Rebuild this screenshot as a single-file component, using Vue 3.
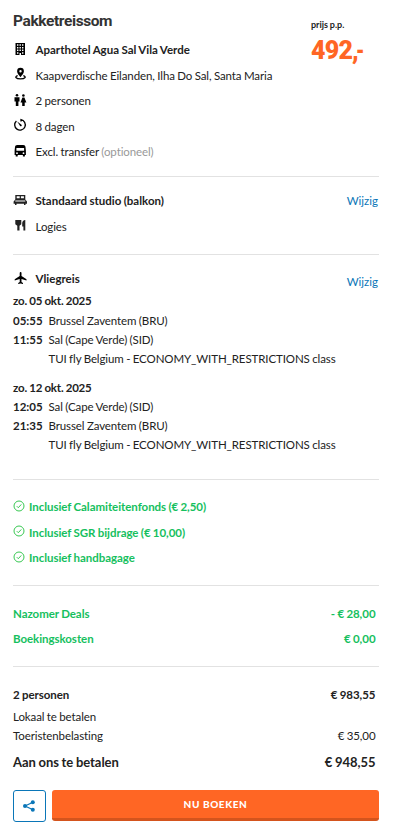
<script setup>
const flights = [
  { date: 'zo. 05 okt. 2025', dep: '05:55', from: 'Brussel Zaventem (BRU)', arr: '11:55', to: 'Sal (Cape Verde) (SID)' },
  { date: 'zo. 12 okt. 2025', dep: '12:05', from: 'Sal (Cape Verde) (SID)', arr: '21:35', to: 'Brussel Zaventem (BRU)' },
]
const included = ['Inclusief Calamiteitenfonds (€ 2,50)', 'Inclusief SGR bijdrage (€ 10,00)', 'Inclusief handbagage']
</script>

<template>
  <main class="summary">
    <section class="trip">
      <div class="trip-info">
        <h1>Pakketreissom</h1>
        <div class="row">
          <svg class="icon up" viewBox="0 0 14 14"><path fill-rule="evenodd" d="M2.5 1h9.500v12H8V11H6.500V13H2.500ZM4 2.200v1.500h1.400V2.200Zm2.500 0v1.500h1.400V2.200Zm2.500 0v1.500h1.400V2.200ZM4 4.900v1.500h1.400V4.900Zm2.500 0v1.500h1.400V4.900Zm2.500 0v1.500h1.400V4.900ZM4 7.600v1.500h1.400V7.600Zm2.500 0v1.500h1.400V7.600Zm2.500 0v1.500h1.400V7.600ZM4 10.300v1.500h1.400V10.300Zm5 0v1.500h1.400V10.300Z" /></svg>
          <b>Aparthotel Agua Sal Vila Verde</b>
        </div>
        <div class="row">
          <svg class="icon up" viewBox="0 0 14 14"><path fill-rule="evenodd" d="M7.500 .8a3.400 3.400 0 0 1 3.400 3.400C10.900 6.600 7.500 10 7.500 10S4.100 6.600 4.100 4.200A3.400 3.400 0 0 1 7.500 .8Zm0 2.200a1.200 1.200 0 1 0 0 2.400a1.200 1.200 0 0 0 0-2.400Z" /><path d="M4.700 8.700C1.400 9.700 2.600 11.900 7.500 11.900s6.100-2.200 2.800-3.200" fill="none" stroke="#000" stroke-width="1.400" /></svg>
          <span>Kaapverdische Eilanden, Ilha Do Sal, Santa Maria</span>
        </div>
        <div class="row">
          <svg class="icon up" viewBox="0 0 14 14"><circle cx="4" cy="2.200" r="1.300" /><path d="M1.500 4.200h5v4.300H5.400V13H2.800V8.500H1.500ZM9.400 4.600h2l2 4.900h-1.700V13H9.200V9.500H7.500Z" /><circle cx="10.400" cy="2.500" r="1.300" /></svg>
          <span>2 personen</span>
        </div>
        <div class="row">
          <svg class="icon up" viewBox="0 0 14 14"><path d="M8 3.500V1.600a5.300 5.300 0 1 1-4.600 1.300" fill="none" stroke="#000" stroke-width="1.300" /><path d="M4.200 3.500l4.300 3.300c.8.900-.5 2.100-1.400 1.300Z" /></svg>
          <span>8 dagen</span>
        </div>
        <div class="row">
          <svg class="icon up" viewBox="0 0 14 14"><path fill-rule="evenodd" d="M4.300 1h5.900c1.500 0 2.100.7 2.300 2l.4 3.800v4.100h-1V12.500H9.900v-1.600H4.700V12.500H2.700v-1.600H1.600V6.800L2 3C2.200 1.700 2.800 1 4.300 1ZM3.400 3.900v2.900h7.700V3.900ZM4 8.300a.9.900 0 1 0 0 1.800a.9.900 0 0 0 0-1.800Zm6.500 0a.9.900 0 1 0 0 1.800a.9.900 0 0 0 0-1.800Z" /></svg>
          <span>Excl. transfer <span class="muted">(optioneel)</span></span>
        </div>
      </div>
      <div class="price">
        <small>prijs p.p.</small>
        <strong>492<span class="comma">,</span><span class="dash">-</span></strong>
      </div>
    </section>

    <section class="room">
      <div>
        <div class="row">
          <svg class="icon dark up" viewBox="0 0 14 14"><path fill-rule="evenodd" d="M2.300 2h10v4.500l1.700 2V10.700h-1.500v1.300H11V10.700H3.500v1.300H2V10.700H.6V8.500l1.700-2ZM3.700 3.300v2h3v-2Zm4.200 0v2h3v-2ZM2.300 7.500v.9h10v-.9Z" /></svg>
          <b>Standaard studio (balkon)</b>
        </div>
        <div class="row">
          <svg class="icon dark up" viewBox="0 0 14 14"><path d="M2.300 2h6v4.300L6.500 7.800v4.700H4.300V7.800L2.300 6.300ZM12.300 2v10.500h-1.900V8.500H9.200V5.200c0-1.800 1.200-3.200 3.100-3.200Z" /></svg>
          <span>Logies</span>
        </div>
      </div>
      <a class="change">Wijzig</a>
    </section>

    <section class="travel">
      <div class="travel-head">
        <div class="row">
          <svg class="icon up" viewBox="0 0 14 14"><path d="M6.700 5V1.900C6.700 .6 8.500 .6 8.500 1.900V5l5 3.300v1.200L8.500 8v3l1.500 1.100v.9L7.600 12.400l-2.400.6v-.9L6.700 11V8L1.700 9.500V8.300Z" /></svg>
          <b>Vliegreis</b>
        </div>
        <a class="change">Wijzig</a>
      </div>
      <div v-for="f in flights" :key="f.date" class="flight">
        <b class="date">{{ f.date }}</b>
        <b>{{ f.dep }}</b><span>{{ f.from }}</span>
        <b>{{ f.arr }}</b><span>{{ f.to }}</span>
        <span class="carrier">TUI fly Belgium - ECONOMY_WITH_RESTRICTIONS class</span>
      </div>
    </section>

    <section class="included">
      <div v-for="item in included" :key="item" class="inc">
        <svg viewBox="0 0 12 12"><circle cx="6" cy="6" r="5" /><path d="M3.800 6.200l1.500 1.500l3-3.300" /></svg>
        <b>{{ item }}</b>
      </div>
    </section>

    <section class="deals">
      <div class="line"><b>Nazomer Deals</b><b>- € 28,00</b></div>
      <div class="line"><b>Boekingskosten</b><b>€ 0,00</b></div>
    </section>

    <section class="totals">
      <div class="line persons"><b>2 personen</b><b>€ 983,55</b></div>
      <div class="line"><span>Lokaal te betalen</span></div>
      <div class="line"><span>Toeristenbelasting</span><span>€ 35,00</span></div>
      <div class="line grand"><b>Aan ons te betalen</b><b>€ 948,55</b></div>
    </section>

    <div class="actions">
      <button class="share" aria-label="Delen">
        <svg viewBox="0 0 12 12"><path d="M10 2.200L2 6l8 3.800" /><circle cx="2" cy="6" r="2" /><circle cx="9.800" cy="2.200" r="2" /><circle cx="9.800" cy="9.800" r="2" /></svg>
      </button>
      <button class="book">NU BOEKEN</button>
    </div>
  </main>
</template>

<style>
body { background: #fff; }
</style>

<style scoped>
.summary {
  box-sizing: border-box;
  width: 407px;
  height: 835px;
  padding: 0 28px 0 13px;
  overflow: hidden;
  font: 11.5px/19px Lato, sans-serif;
  font-variant-ligatures: none;
  letter-spacing: -.1px;
  word-spacing: -.4px;
  color: #222;
  white-space: nowrap;
}
b { letter-spacing: -.05px; }
section { box-sizing: border-box; border-bottom: 1px solid #e2e2e2; }
h1 {
  margin: 0 0 6px;
  font: 700 15.5px/20px Roboto, sans-serif;
  letter-spacing: -.4px;
  color: #333;
}
.trip { display: flex; height: 177px; padding-top: 11px; }
.trip-info { width: 297px; }
.row { display: flex; align-items: center; height: 25.500px; gap: 8.500px; }
.row b { letter-spacing: 0; }
.icon { width: 14px; height: 14px; flex: none; fill: #000; }
.icon.up { margin-top: -2px; }
.icon.dark { fill: #222; }
.muted { color: #999; }
.price { display: flex; flex-direction: column; padding: 5px 0 0 1px; }
.price small { font-size: 9px; line-height: 18px; font-weight: 700; letter-spacing: 0; }
.price strong { font: 900 25px/32px Roboto, sans-serif; color: #ff6624; letter-spacing: -.8px; padding-top: 1px; }
.price .comma { letter-spacing: -3px; }
.price .dash { display: inline-block; width: 7px; letter-spacing: 0; transform: scaleX(.75); transform-origin: left; }
.room { display: flex; justify-content: space-between; height: 78px; padding-top: 11px; }
.change { color: #0a76b8; line-height: 26px; padding-right: 1px; letter-spacing: 0; }
.travel { height: 225px; padding-top: 11px; }
.travel-head { display: flex; justify-content: space-between; height: 25px; }
.travel-head .change { padding-top: 3px; }
.flight {
  display: grid;
  grid-template-columns: 35.500px 1fr;
  grid-template-rows: 20px;
  grid-auto-rows: 19px;
  margin-bottom: 10px;
}
.flight + .flight { grid-template-rows: 19px; }
.flight b { letter-spacing: 0; }
.flight .date { grid-column: 1 / 3; letter-spacing: -.18px; }
.flight .carrier { grid-column: 2; }
.included { height: 106px; padding-top: 14px; color: #16c05e; }
.inc { display: flex; align-items: center; height: 25.500px; gap: 4px; }
.inc svg { width: 12px; height: 12px; fill: none; stroke: #38c852; stroke-width: 1; margin-top: -2px; }
.deals { height: 81px; padding-top: 15px; color: #16c05e; }
.line { display: flex; justify-content: space-between; padding-right: 3.500px; }
.deals .line { line-height: 25px; }
.totals { border: 0; height: 123px; padding-top: 18px; }
.totals .persons { height: 22px; }
.totals .grand { font-size: 13px; line-height: 24px; padding-top: 5px; }
.actions { display: flex; gap: 6px; }
.share {
  display: grid;
  place-items: center;
  box-sizing: border-box;
  width: 33px;
  height: 32px;
  padding: 0 2px 0 0;
  border: 1px solid #0a76b8;
  border-radius: 3px;
  background: #fff;
}
.share svg { width: 12px; height: 12px; fill: #0a76b8; }
.share path { fill: none; stroke: #0a76b8; stroke-width: 1.200; }
.book {
  flex: 1;
  height: 31px;
  padding: 0;
  border: 0;
  border-bottom: 3px solid #d4541d;
  border-radius: 3px;
  background: #ff6624;
  color: #fff;
  font: 900 10px/27px Lato, sans-serif;
  letter-spacing: .6px;
}
</style>
